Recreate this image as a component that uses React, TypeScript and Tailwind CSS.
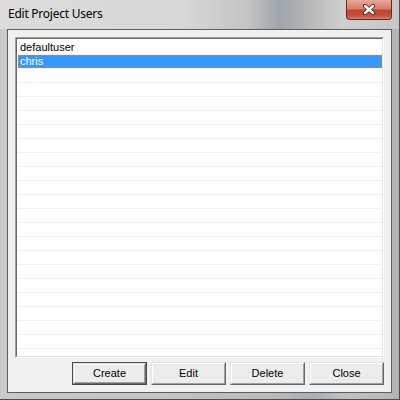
import React from "react"

const users = ["defaultuser", "chris"]
const selected = 1
const rowCount = 24

function CloseGlyph() {
  return (
    <svg width="14" height="11" viewBox="0 0 14 11">
      <path d="M3 2 L11 9 M11 2 L3 9" stroke="#4a2a24" strokeWidth="4.2" strokeLinecap="round" />
      <path d="M3 2 L11 9 M11 2 L3 9" stroke="#ffffff" strokeWidth="2.4" strokeLinecap="round" />
    </svg>
  )
}

function WinButton({ label, isDefault }: { label: string; isDefault?: boolean }) {
  return (
    <div className={"w-[75px] h-[23px] " + (isDefault ? "border border-[#4b4b4b]" : "")}>
      <div className="w-full h-full border-t border-l border-[#e3e3e3] border-r-[#696969] border-b-[#696969] border-r border-b">
        <div className="w-full h-full border-t border-l border-white border-r border-b border-r-[#a0a0a0] border-b-[#a0a0a0] bg-[#ececec] flex items-center justify-center text-[11px] text-black font-['Liberation_Sans',Arial,sans-serif]">
          {label}
        </div>
      </div>
    </div>
  )
}

export default function App() {
  return (
    <div className="w-[400px] h-[400px] flex flex-col bg-[linear-gradient(90deg,#c9c9c9_0%,#c4c4c4_40%,#b9b9b9_70%,#a9aeb2_78%,#c2c2c2_88%,#b4b4b4_100%)] border-r border-b border-[#4f4f4f] overflow-hidden">
      {/* title bar */}
      <div className="h-[29px] flex items-start pl-[8px] pr-[7px] bg-[linear-gradient(90deg,#dcdcdc_0%,#d8d8d8_45%,#c4c4c4_62%,#9fa5a9_70%,#b8b8b8_78%,#d0d0d0_86%,#c6c6c6_100%)]">
        <div className="pt-[6px] text-[12px] leading-[16px] text-black font-['Noto_Sans',sans-serif] tracking-[-0.25px]">
          Edit Project Users
        </div>
        <div className="flex-1" />
        <div className="w-[46px] h-[20px] rounded-b-[4px] border border-t-0 border-[#6b2a20] bg-[linear-gradient(180deg,#e8a898_0%,#d67f6c_45%,#c2422c_55%,#c8533a_85%,#d9806a_100%)] flex items-center justify-center">
          <CloseGlyph />
        </div>
      </div>

      {/* client area */}
      <div className="mx-[7px] h-[364px] border border-[#5e5e5e] bg-[#f0f0f0] flex flex-col px-[7px] pt-[7px] pb-[7px] gap-[4px]">
        <div className="h-[321px] border-t border-l border-[#a0a0a0] border-r border-b border-r-white border-b-white">
          <div className="w-full h-full border-t border-l border-[#696969] border-r border-b border-r-[#e3e3e3] border-b-[#e3e3e3] bg-white overflow-hidden pt-[2px] font-['Liberation_Sans',Arial,sans-serif] text-[11px]">
            {Array.from({ length: rowCount }).map((_, i) => (
              <div key={i} className="h-[14px] border-b border-[#f0f0f0]">
                {i === selected ? (
                  <div className="h-[13px] ml-[1px] bg-[#3399ff] text-white leading-[13px] pl-[2px] outline outline-1 outline-dotted outline-[#d9822b] -outline-offset-1">
                    {users[i]}
                  </div>
                ) : (
                  <div className="h-[13px] leading-[13px] pl-[3px] text-black">{users[i] ?? ""}</div>
                )}
              </div>
            ))}
          </div>
        </div>
        <div className="flex justify-end gap-[4px]">
          <WinButton label="Create" isDefault />
          <WinButton label="Edit" />
          <WinButton label="Delete" />
          <WinButton label="Close" />
        </div>
      </div>
    </div>
  )
}
